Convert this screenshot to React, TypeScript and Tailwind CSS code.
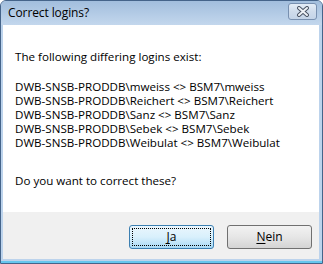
const logins = ["mweiss", "Reichert", "Sanz", "Sebek", "Weibulat"];

function CloseGlyph() {
  return (
    <svg width="14" height="11" viewBox="0 0 14 11">
      <path d="M3 2 L11 9 M11 2 L3 9" stroke="#4b5566" strokeWidth="4" strokeLinecap="round" />
      <path d="M3 2 L11 9 M11 2 L3 9" stroke="#eef2f7" strokeWidth="2" strokeLinecap="round" />
    </svg>
  );
}

export default function App() {
  return (
    <div
      className="w-[323px] h-[264px] flex flex-col bg-[#bcd3ec] border border-[#45648a] rounded-t-[6px] overflow-hidden text-black"
      style={{ fontFamily: '"Open Sans", "Noto Sans", sans-serif' }}
    >
      <div className="h-[24px] shrink-0 flex items-center justify-between pl-[7px] pr-[5px] bg-gradient-to-b from-[#a2bedd] to-[#c3d7ed]">
        <span className="text-[12px] leading-none -mt-[1px] tracking-[-0.1px]">Correct logins?</span>
        <button className="w-[29px] h-[17px] mt-[-3px] flex items-center justify-center rounded-[3px] border border-[#7890b0] bg-gradient-to-b from-[#e4edf7] via-[#cfdcec] to-[#c4d4e8]">
          <CloseGlyph />
        </button>
      </div>
      <div className="flex-1 flex flex-col pl-[2px] pr-[3px] pb-[2px] bg-[#bcd3ec]">
        <div className="h-[187px] shrink-0 bg-white pl-[12px] pt-[25px] text-[11.6px] leading-[14px]">
          <p>The following differing logins exist:</p>
          <div className="mt-[16px]">
            {logins.map((n) => (
              <p key={n}>
                DWB-SNSB-PRODDB\{n} &lt;&gt; BSM7\{n}
              </p>
            ))}
          </div>
          <p className="mt-[24px]">Do you want to correct these?</p>
        </div>
        <div className="flex-1 bg-[#f0f0f0] flex justify-end items-start gap-[13px] pt-[13px] pr-[7px]">
          <button className="w-[85px] h-[24px] rounded-[3px] border border-[#3c7fb1] bg-gradient-to-b from-[#eaf6fd] via-[#d9f0fc] to-[#a7d9f5] text-[12px] outline-1 outline-dotted outline-black outline-offset-[-4px]">
            <span className="underline underline-offset-[2px]">J</span>a
          </button>
          <button className="w-[85px] h-[24px] rounded-[3px] border border-[#707070] bg-gradient-to-b from-[#f2f2f2] via-[#e6e6e6] to-[#d4d4d4] text-[12px]">
            <span className="underline underline-offset-[2px]">N</span>ein
          </button>
        </div>
      </div>
      <div className="h-[2px] shrink-0 bg-[#66c6ee]" />
    </div>
  );
}
